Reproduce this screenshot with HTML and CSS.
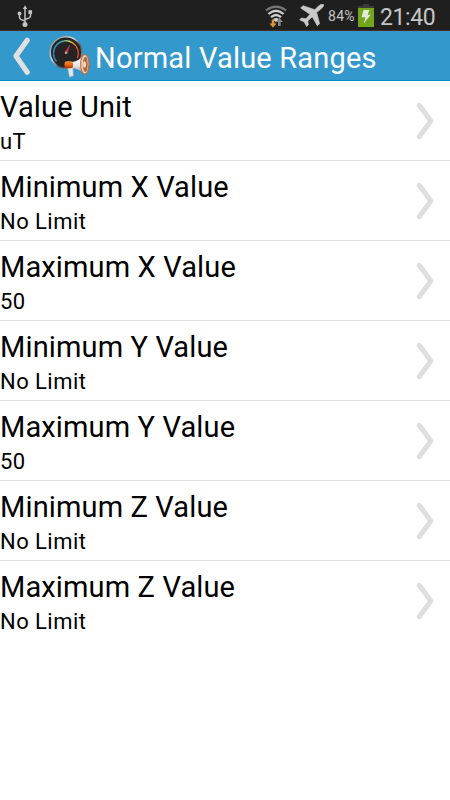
FILE: index.html
```html
<!DOCTYPE html>
<html lang="en">
<head>
<meta charset="utf-8">
<title>Normal Value Ranges</title>
<link rel="stylesheet" href="styles.css">
</head>
<body>
<svg class="defs" width="0" height="0">
  <symbol id="chevron" viewBox="0 0 18 40"><path d="M3.300 4.300 14.800 20 3.300 35.700" fill="none" stroke="#dedede" stroke-width="5" stroke-linecap="round" stroke-linejoin="round"/></symbol>
</svg>
<div class="status">
  <svg class="usb" width="16" height="24" viewBox="0 0 16 24" fill="#c4c4c4" stroke="#c4c4c4">
    <path d="M8 4v17M2.500 11v2.500q0 2 5.500 3.500M13.500 9v3q0 2-5.500 3.500" fill="none" stroke-width="1.500"/>
    <path d="M8 1.200 10.200 5H5.800z" stroke="none"/><circle cx="8" cy="20.500" r="2.500" stroke="none"/>
    <circle cx="2.500" cy="9.500" r="1.900" stroke="none"/><path d="M11.400 6.200h3.700v3.700h-3.700z" stroke="none"/>
  </svg>
  <span class="space"></span>
  <svg class="wifi" width="22" height="24" viewBox="0 0 22 24">
    <g fill="none" stroke="#d0d0d0" stroke-width="2.200">
      <path d="M1 5.500Q11-2.300 21 5.500" stroke="#777"/><path d="M3.400 9Q11 2.500 18.600 9"/><path d="M6 12.200Q11 7.800 16 12.200"/>
    </g>
    <path d="M8 14.200Q11 11.800 14 14.200L11 17.200z" fill="#d0d0d0"/>
    <path d="M6.700 14.500h2.600v4h2.300L8 22.500 4.400 18.500h2.300z" fill="#df982f"/>
    <path d="M13 21v-4h-2.100l3.500-4.300L18 17h-2.300v4z" fill="#858585"/>
  </svg>
  <svg class="plane" width="26" height="23" viewBox="0 0 26 23" fill="#c9c9c9" stroke="#c9c9c9" stroke-width=".7" stroke-linejoin="round">
    <path d="M24.500.4Q22-.5 19.300 2.300L15.800 5.700 4 1.700 1.700 4 11 10.300 7 14.800 2.400 14.100.7 15.800 5.300 18.100 7.600 22.400 9.300 20.900 8.800 16.800 13.300 12.800 18.300 21.800 20.600 19.700 17.600 8.400 21.800 5Q25.400 2.200 24.500.4z"/>
  </svg>
  <span class="percent">84%</span>
  <svg class="battery" width="16" height="23" viewBox="0 0 16 23">
    <path d="M5 0h6v2h5v3H0V2h5z" fill="#3b3b3b"/><path d="M0 4h16v19H0z" fill="#72a51c"/>
    <path d="M5.500 6h6L9.700 10.800h3L5.700 19.500 7.500 13.200H3.600z" fill="#e4e9d9"/>
  </svg>
  <span class="clock">21:40</span>
</div>
<header class="header">
  <svg class="back" width="18" height="40" viewBox="0 0 18 40"><path d="M15.200 4.300 4 20 15.200 36.200" fill="none" stroke="#e0e0e0" stroke-width="5.200" stroke-linecap="round" stroke-linejoin="round"/></svg>
  <svg class="logo" width="42" height="44" viewBox="0 0 42 44">
    <defs>
      <linearGradient id="rim" x2="1" y2="1"><stop stop-color="#777"/><stop offset=".4" stop-color="#ddd"/><stop offset=".6" stop-color="#555"/><stop offset="1" stop-color="#aaa"/></linearGradient>
      <linearGradient id="scale"><stop stop-color="#2e83c5"/><stop offset=".4" stop-color="#42a8a0"/><stop offset=".65" stop-color="#e1d94a"/><stop offset="1" stop-color="#d93b20"/></linearGradient>
      <linearGradient id="orange" x2="0" y2="1"><stop stop-color="#ff9a35"/><stop offset=".5" stop-color="#ed6410"/><stop offset="1" stop-color="#a93405"/></linearGradient>
      <linearGradient id="horn" x2="0" y2="1"><stop stop-color="#fff"/><stop offset=".55" stop-color="#e8e8e8"/><stop offset="1" stop-color="#888"/></linearGradient>
    </defs>
    <circle cx="17" cy="17.500" r="15.800" fill="#242424" stroke="url(#rim)" stroke-width="1.500"/>
    <path d="M7.500 26.500A12.500 12.500 0 1 1 28.500 23" fill="none" stroke="url(#scale)" stroke-width="1.500"/>
    <path d="m16 17.500 4.500-7-2.200 8z" fill="#d52a38" stroke="#d52a38" stroke-width=".7"/><circle cx="17" cy="17.800" r="1.300" fill="#aaa"/>
    <path d="M18.500 31.500h5.200l.6 9.300-3.800 1.200z" fill="#e5e5e5" stroke="#bbb" stroke-width=".5"/>
    <path d="M23 27Q30 26 35.500 20v19Q30 34 23 33z" fill="url(#horn)"/>
    <rect x="15.500" y="26.200" width="8.500" height="7" rx="2.500" fill="url(#orange)"/>
    <ellipse cx="35.800" cy="29.300" rx="4.100" ry="9.800" fill="#ddd" stroke="#d46a2c" stroke-width="1.200"/>
    <ellipse cx="36.300" cy="29.400" rx="2.500" ry="7.600" fill="#b7672f"/><ellipse cx="35.600" cy="29.400" rx="1.500" ry="3.200" fill="#f2d5bd"/>
  </svg>
  <h1>Normal Value Ranges</h1>
</header>
<main>
  <div class="row"><div><h2>Value Unit</h2><p>uT</p></div><svg class="arrow"><use href="#chevron"/></svg></div>
  <div class="row"><div><h2>Minimum X Value</h2><p>No Limit</p></div><svg class="arrow"><use href="#chevron"/></svg></div>
  <div class="row"><div><h2>Maximum X Value</h2><p>50</p></div><svg class="arrow"><use href="#chevron"/></svg></div>
  <div class="row"><div><h2>Minimum Y Value</h2><p>No Limit</p></div><svg class="arrow"><use href="#chevron"/></svg></div>
  <div class="row"><div><h2>Maximum Y Value</h2><p>50</p></div><svg class="arrow"><use href="#chevron"/></svg></div>
  <div class="row"><div><h2>Minimum Z Value</h2><p>No Limit</p></div><svg class="arrow"><use href="#chevron"/></svg></div>
  <div class="row last"><div><h2>Maximum Z Value</h2><p>No Limit</p></div><svg class="arrow"><use href="#chevron"/></svg></div>
</main>
</body>
</html>
```
FILE: styles.css
```css
* { box-sizing: border-box; }
body { margin: 0; height: 800px; background: #fff; color: #000; font-family: Roboto, "Liberation Sans", sans-serif; font-weight: 400; overflow: hidden; }
svg { display: block; flex: none; }
.defs { position: absolute; }
.status { display: flex; height: 31px; background: #1f1f1f; border-bottom: 1px solid #4a2b27; color: #c6c6c6; }
.usb { margin: 4px 0 0 17px; }
.space { flex: 1; }
.wifi { margin: 5px 12px 0 0; }
.plane { margin: 4px 3px 0 0; }
.percent { width: 28px; margin-right: 2px; font-size: 14px; line-height: 33px; letter-spacing: .3px; white-space: nowrap; }
.battery { margin: 4px 6px 0 0; }
.clock { width: 70px; font-size: 23px; line-height: 35px; letter-spacing: -.4px; white-space: nowrap; }
.header { display: flex; height: 50px; background: #3398cc; border-bottom: 1px solid #078cc8; }
.back { margin: 5px 0 0 12px; }
.logo { margin: 4px 0 0 19px; }
h1, h2, p { margin: 0; font-weight: 400; white-space: nowrap; }
h1 { margin-left: 4px; font-size: 29px; line-height: 54px; letter-spacing: .2px; color: #fff; }
.row { display: flex; justify-content: space-between; height: 80px; border-bottom: 1px solid #e3e3e3; }
.last { border-bottom: 0; }
h2 { padding-top: 8px; font-size: 29px; line-height: 36px; letter-spacing: .13px; }
p { font-size: 22px; line-height: 34px; letter-spacing: .45px; }
.arrow { width: 18px; height: 40px; margin: 20px 16px 0 0; }
```
